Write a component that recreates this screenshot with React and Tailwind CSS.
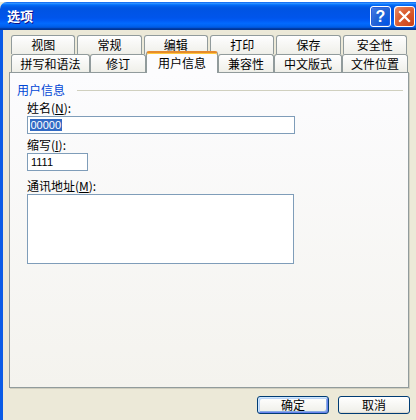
import React from "react";

const tabBg =
  "bg-[linear-gradient(to_bottom,#ffffff,#fafaf9_26%,#f0f0ea_95%,#ecebe6)]";

function Tab({ label, className = "" }) {
  return (
    <div
      className={`flex items-center justify-center border border-b-0 border-[#919B9C] rounded-t-[3px] ${tabBg} text-[12px] leading-[14px] text-black ${className}`}
    >
      {label}
    </div>
  );
}

export default function App() {
  const row1 = ["视图", "常规", "编辑", "打印", "保存", "安全性"];
  return (
    <div className="w-[416px] h-[420px] overflow-hidden bg-[#ECE9D8] font-['Noto_Sans_CJK_SC',sans-serif] text-black">
      {/* top strip */}
      <div className="h-[2px] bg-white" />
      {/* title bar */}
      <div className="h-[28px] flex items-center rounded-tl-[7px] bg-[linear-gradient(to_bottom,#0058EE_0%,#3593FF_4%,#288EFF_6%,#127DFF_8%,#036FFC_10%,#0262EE_14%,#0057E5_20%,#0054E3_24%,#0055EB_56%,#005BF5_66%,#026AFE_76%,#0062EF_86%,#0052D6_92%,#0040AB_94%,#003092_100%)]">
        <span className="pl-[7px] text-[13px] font-bold text-white leading-[16px] [text-shadow:1px_1px_#0F1089]">
          选项
        </span>
        <div className="ml-auto flex gap-[3px] pr-[1px] pt-[1px]">
          <div className="w-[21px] h-[21px] rounded-[3px] border border-white flex items-center justify-center bg-[radial-gradient(circle_at_90%_90%,#0054E9_0%,#2263D5_55%,#4479E4_90%,#fff_100%)] shadow-[inset_0_0_0_1px_#2A5FD8]">
            <span className="text-white font-bold text-[16px] leading-[16px] font-['Liberation_Sans',sans-serif]">
              ?
            </span>
          </div>
          <div className="w-[21px] h-[21px] rounded-[3px] border border-white flex items-center justify-center bg-[radial-gradient(circle_at_90%_90%,#CC4418_0%,#DA5B2E_55%,#E5815C_90%,#fff_100%)]">
            <svg width="13" height="13" viewBox="0 0 13 13">
              <path
                d="M2 2 L11 11 M11 2 L2 11"
                stroke="white"
                strokeWidth="2.2"
                strokeLinecap="square"
              />
            </svg>
          </div>
        </div>
      </div>

      <div className="flex h-[390px]">
        <div className="w-[3px] bg-[#0A5BE6]" />
        <div className="flex-1 pl-[6px]">
          {/* tabs */}
          <div className="mt-[5px] ml-[2px]">
            <div className="h-[19px] w-[396px] flex gap-[2px]">
              {row1.map((t) => (
                <Tab key={t} label={t} className="flex-1" />
              ))}
            </div>
            <div className="h-[18px] flex items-end">
              <Tab label="拼写和语法" className="w-[79px] h-[18px]" />
              <Tab label="修订" className="w-[56px] h-[18px]" />
              <div className="relative z-10 w-[72px] h-[22px] -mb-[1px] rounded-t-[3px] border border-b-0 border-[#919B9C] border-t-[#E68B2C] border-t-2 bg-[#FCFCFE] flex items-center justify-center text-[12px] leading-[14px] shadow-[inset_0_1px_0_#FFC73C]">
                用户信息
              </div>
              <Tab label="兼容性" className="w-[56px] h-[18px]" />
              <Tab label="中文版式" className="w-[68px] h-[18px]" />
              <Tab label="文件位置" className="w-[66px] h-[18px]" />
            </div>
          </div>

          {/* panel */}
          <div className="w-[400px] h-[316px] border border-[#919B9C] shadow-[1px_1px_0_#D0CEBF] bg-[linear-gradient(to_bottom,#FCFCFE,#F4F3EE)] pt-[10px] pl-[7px]">
            <div className="flex items-center h-[14px]">
              <span className="text-[12px] leading-[14px] text-[#0046D5]">
                用户信息
              </span>
              <div className="flex-1 h-px bg-[#D0D0BF] ml-[12px] mr-[5px]" />
            </div>
            <div className="pl-[10px]">
              <div className="mt-[4px] h-[14px] text-[12px] leading-[14px]">
                姓名(<u>N</u>):
              </div>
              <div className="mt-[1px] w-[268px] h-[18px] border border-[#7F9DB9] bg-white flex items-center pl-[2px]">
                <span className="bg-[#316AC5] text-white text-[11px] leading-[12px] font-['Liberation_Sans',sans-serif] px-[0.5px]">
                  00000
                </span>
              </div>
              <div className="mt-[4px] h-[14px] text-[12px] leading-[14px]">
                缩写(<u>I</u>):
              </div>
              <div className="mt-[1px] w-[61px] h-[18px] border border-[#7F9DB9] bg-white flex items-center pl-[3px]">
                <span className="text-[11px] leading-[12px] font-['Liberation_Sans',sans-serif]">
                  1111
                </span>
              </div>
              <div className="mt-[8px] h-[14px] text-[12px] leading-[14px]">
                通讯地址(<u>M</u>):
              </div>
              <div className="mt-[1px] w-[267px] h-[70px] border border-[#7F9DB9] bg-white" />
            </div>
          </div>

          {/* buttons */}
          <div className="mt-[8px] w-[401px] flex justify-end gap-[9px]">
            <div className="w-[72px] h-[18px] rounded-[3px] border border-[#003C74] bg-[linear-gradient(to_bottom,#ffffff,#f0f0ea_90%,#d6d0c5)] shadow-[inset_1px_1px_0_#CEE7FF,inset_-1px_-1px_0_#6982EE,inset_2px_2px_0_#BCD4F6,inset_-2px_-2px_0_#89ADE4] flex items-center justify-center text-[12px] leading-[14px]">
              确定
            </div>
            <div className="w-[72px] h-[18px] rounded-[3px] border border-[#003C74] bg-[linear-gradient(to_bottom,#ffffff,#f0f0ea_90%,#d6d0c5)] flex items-center justify-center text-[12px] leading-[14px]">
              取消
            </div>
          </div>
        </div>
      </div>
    </div>
  );
}
